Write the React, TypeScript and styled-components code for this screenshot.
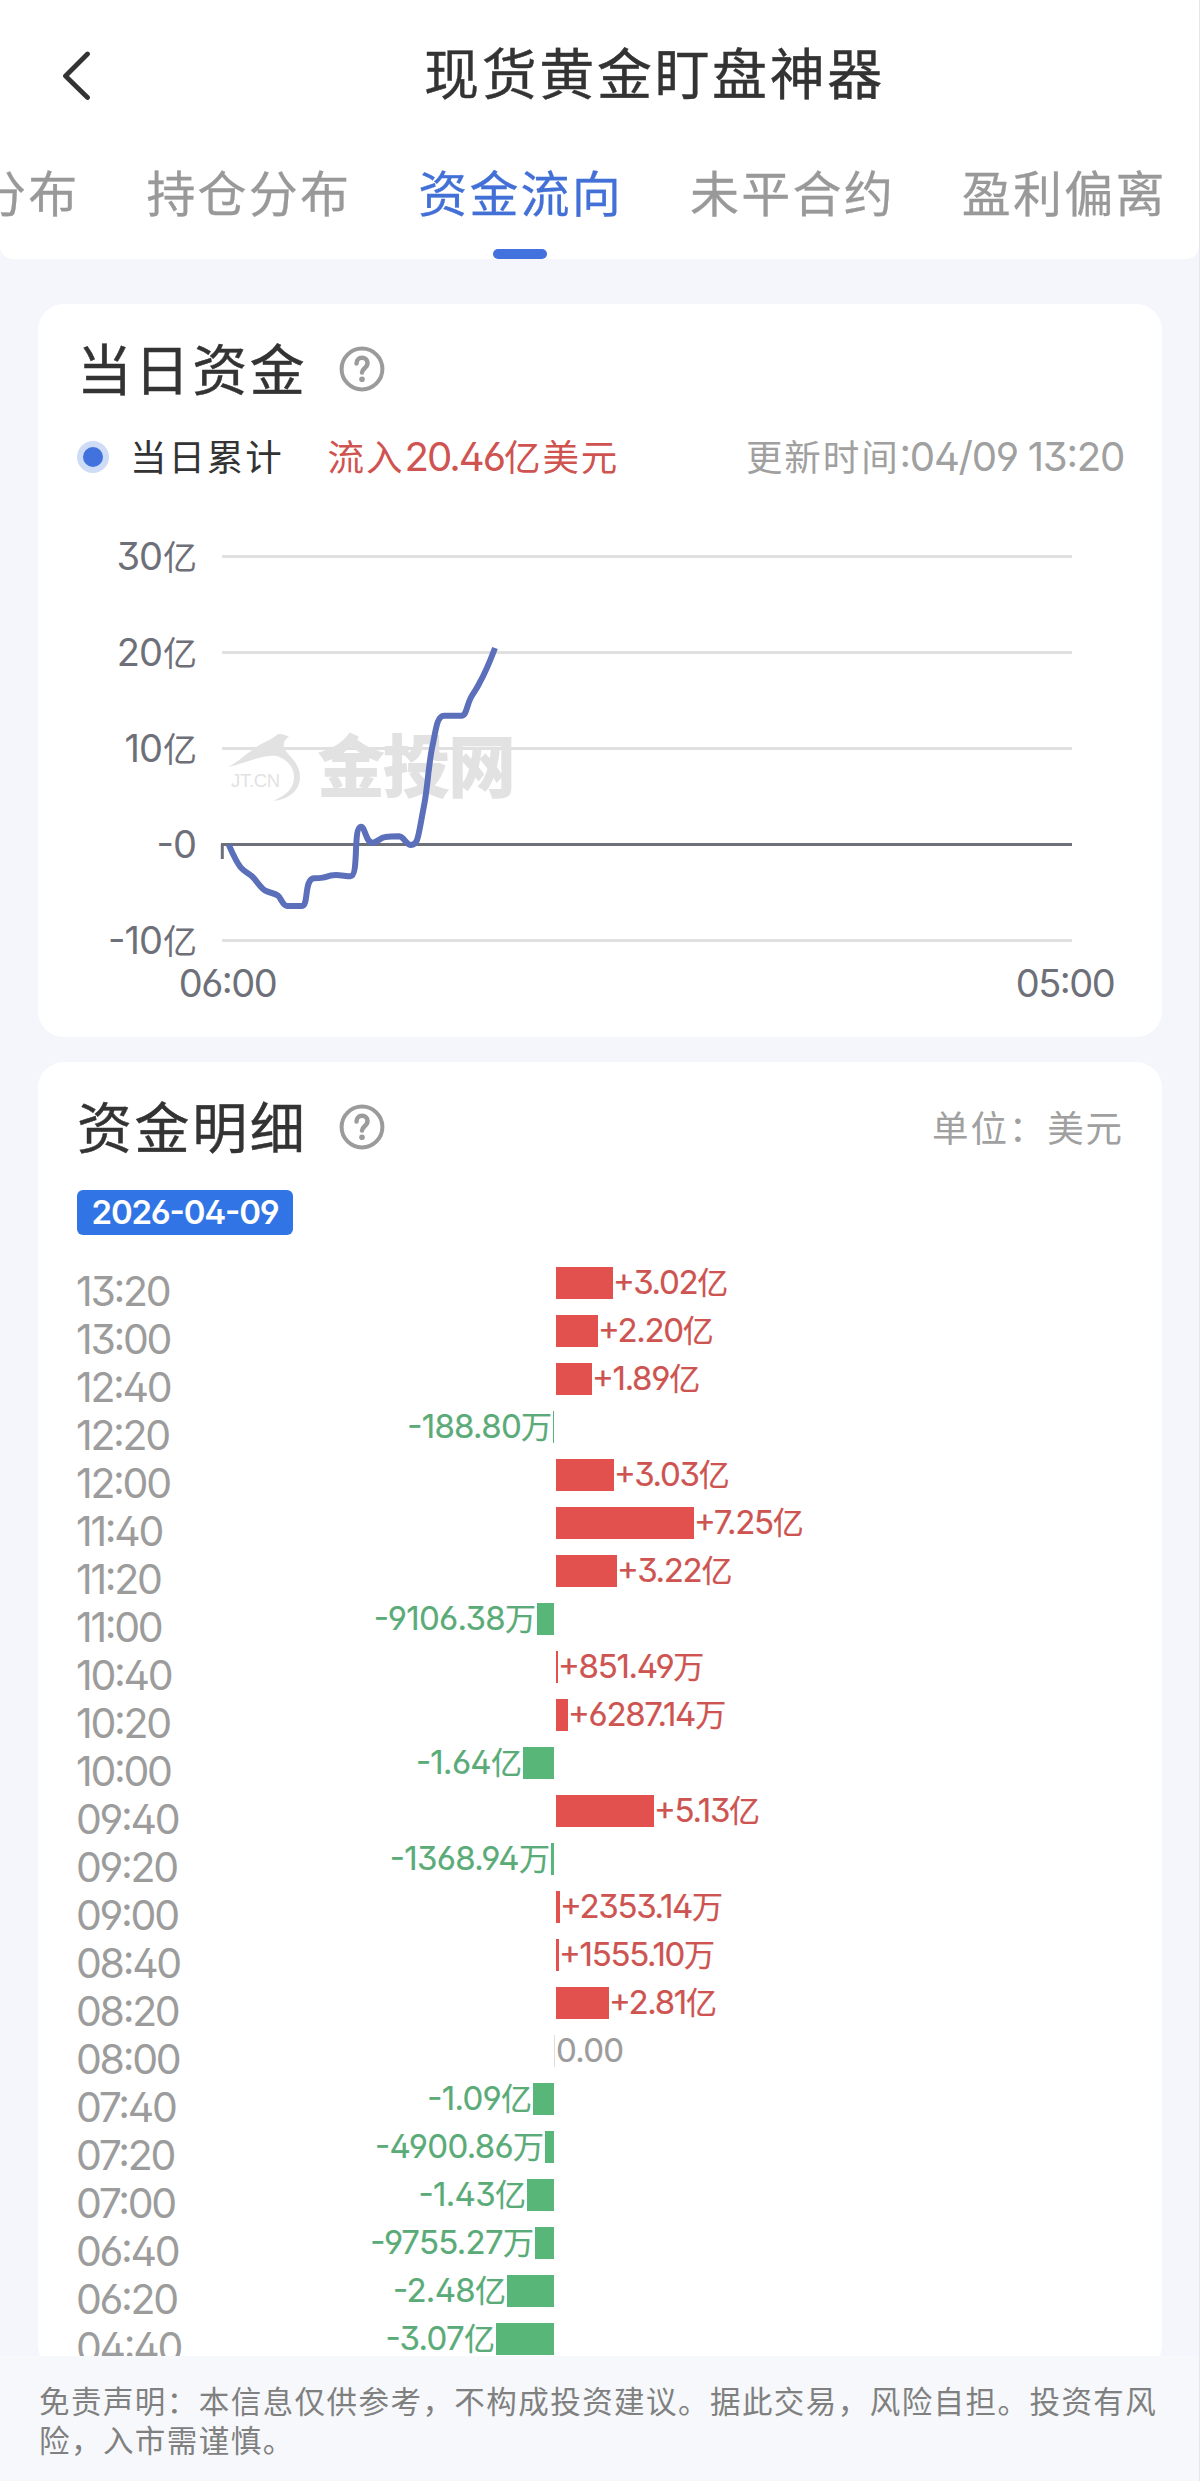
import React from 'react';
import styled, { createGlobalStyle } from 'styled-components';

const cjk = '"Noto Sans CJK SC", sans-serif';
const latin = 'Inter, "Noto Sans CJK SC", sans-serif';

const GlobalStyle = createGlobalStyle`
  *, *::before, *::after { box-sizing: border-box; }
  html, body { margin: 0; padding: 0; background: #f5f6fc; }
  body { font-family: ${cjk}; color: #333; }
`;

const Screen = styled.div`
  width: 1200px;
  height: 2481px;
  display: flex;
  flex-direction: column;
  overflow: hidden;
  background: #f5f6fc;
  border-right: 1px solid #e6e7ee;
`;

const Header = styled.header`
  flex: none;
  height: 259px;
  background: #fff;
  border-radius: 0 0 13px 13px;
  display: flex;
  flex-direction: column;
  overflow: hidden;
`;

const TitleBar = styled.div`
  height: 148px;
  display: grid;
  grid-template-columns: 303px 1fr 200px;
  align-items: center;
`;

const BackButton = styled.button`
  width: 60px;
  height: 60px;
  margin: 4px 0 0 46px;
  padding: 0;
  border: 0;
  background: none;
  display: flex;
  align-items: center;
  justify-content: center;
`;

const PageTitle = styled.h1`
  margin: 0 0 8px 7px;
  text-align: center;
  font-size: 55px;
  line-height: 80px;
  font-weight: 400;
  letter-spacing: 2.600px;
  -webkit-text-stroke: 0.4px currentColor;
  white-space: nowrap;
`;

const Tabs = styled.nav`
  height: 111px;
  display: flex;
  gap: 67px;
  margin-left: -23px;
`;

const Tab = styled.div<{ $active?: boolean }>`
  flex: none;
  display: flex;
  flex-direction: column;
  align-items: center;
  justify-content: space-between;
  font-size: 49px;
  line-height: 86px;
  letter-spacing: 2.2px;
  -webkit-text-stroke: 0.3px currentColor;
  white-space: nowrap;
  color: ${p => (p.$active ? '#4270d6' : '#999')};
`;

const Indicator = styled.span`
  width: 54px;
  height: 10px;
  margin-right: 2px;
  border-radius: 5px;
  background: #4272de;
`;

const Content = styled.main`
  flex: none;
  height: 2097px;
  padding: 45px 37px 0 38px;
  display: flex;
  flex-direction: column;
  gap: 25px;
  overflow: hidden;
`;

const Card = styled.section<{ $height?: number }>`
  flex: none;
  height: ${p => (p.$height ? `${p.$height}px` : 'auto')};
  background: #fff;
  border-radius: 26px;
  padding: 25px 39px 0;
`;

const CardHead = styled.div`
  height: 80px;
  display: flex;
  align-items: center;
`;

const CardTitle = styled.h2`
  margin: 0 32px 6px 0;
  font-size: 55px;
  line-height: 80px;
  font-weight: 400;
  letter-spacing: 2.600px;
  -webkit-text-stroke: 0.4px currentColor;
`;

const Note = styled.span`
  margin-left: auto;
  margin-right: -1px;
  font-size: 36.500px;
  line-height: 44px;
  letter-spacing: 1.900px;
  color: #a0a0a0;
  white-space: nowrap;
`;

const Num = styled.span<{ $spacing?: string }>`
  font-family: ${latin};
  font-size: 1.1em;
  line-height: 1;
  letter-spacing: ${p => p.$spacing ?? '-0.05em'};
  font-feature-settings: "cv09" 1, "ss01" 1, "case" 1;
`;

const Legend = styled.div`
  height: 54px;
  margin-top: 20px;
  display: flex;
  align-items: center;
  font-size: 36.500px;
  line-height: 54px;
  letter-spacing: 1.900px;
  white-space: nowrap;
`;

const Dot = styled.i`
  flex: none;
  width: 32px;
  height: 32px;
  border-radius: 50%;
  border: 6px solid #cfdcf6;
  background: #4272de;
  margin: 1px 21px 0 0;
`;

const LegendValue = styled.span`
  margin-left: 44px;
  color: #cf5350;
`;

const Chart = styled.svg`
  display: block;
  width: 1046px;
  height: 520px;
  font-family: ${latin};
  font-feature-settings: "cv09" 1, "ss01" 1, "case" 1;
`;

const DateBadge = styled.div`
  width: 216px;
  height: 45px;
  margin-top: 23px;
  border-radius: 6px;
  background: #3174e6;
  color: #fff;
  display: flex;
  align-items: center;
  justify-content: center;
  font: 600 33px/45px ${latin};
  letter-spacing: -1.2px;
  font-feature-settings: "cv09" 1, "ss01" 1, "case" 1;
`;

const Rows = styled.div`
  margin-top: 32px;
`;

const Row = styled.div`
  height: 48px;
  display: grid;
  grid-template-columns: 200px 277px 2px 1fr;
  align-items: start;
`;

const Time = styled.span`
  font: 400 41px/48px ${latin};
  letter-spacing: -2.3px;
  margin-left: -1px;
  color: #9c9c9c;
  font-feature-settings: "cv09" 1, "ss01" 1, "case" 1;
`;

const Side = styled.div<{ $left?: boolean }>`
  display: flex;
  align-items: center;
  justify-content: ${p => (p.$left ? 'flex-end' : 'flex-start')};
  height: 32px;
  white-space: nowrap;
`;

const Bar = styled.i<{ $up: boolean }>`
  flex: none;
  height: 32px;
  background: ${p => (p.$up ? '#e2514d' : '#58b778')};
`;

const Axis = styled.i<{ $on: boolean }>`
  width: 1px;
  height: 32px;
  background: ${p => (p.$on ? '#dedede' : 'transparent')};
`;

const Value = styled.span<{ $tone: 'up' | 'down' | 'flat' }>`
  font-size: 31px;
  line-height: 32px;
  padding: 0 1px 0 0;
  margin-top: -2px;
  -webkit-text-stroke: 0.2px currentColor;
  color: ${p => ({ up: '#cd5451', down: '#5aab78', flat: '#9c9c9c' })[p.$tone]};
`;

const ValueNum = styled(Num)<{ $tight: boolean }>`
  font-size: 33px;
  letter-spacing: ${p => (p.$tight ? '-1.3px' : '-0.7px')};
`;

const Disclaimer = styled.footer`
  flex: 1;
  padding: 25px 30px 0 39px;
  background: #f6f8fb;
  color: #808080;
  font-size: 30.500px;
  line-height: 39px;
  letter-spacing: 1.45px;
`;

const HelpIcon = () => (
  <svg width="46" height="46" viewBox="0 0 46 46" fill="none" stroke="#9b9b9b">
    <circle cx="23" cy="23" r="20.4" strokeWidth="4" />
    <path d="M17.500 17.500c0-3.700 2.500-5.700 5.500-5.700s5.500 2 5.500 5.200c0 2.500-1.100 3.700-2.900 5.200-1.700 1.500-2.600 2.500-2.600 4.300" strokeWidth="4.500" strokeLinecap="round" />
    <circle cx="23" cy="33.200" r="2.800" fill="#9b9b9b" stroke="none" />
  </svg>
);

const gridLines = [
  { y: 26, label: '30', unit: '亿' },
  { y: 122, label: '20', unit: '亿' },
  { y: 218, label: '10', unit: '亿' },
  { y: 314, label: '-0', unit: '' },
  { y: 410, label: '-10', unit: '亿' },
];

const FlowChart = () => (
  <Chart viewBox="77 483 1046 520">
    {gridLines.map(g => (
      <g key={g.label}>
        {g.y !== 314 && <rect x="222" y={g.y + 529} width="850" height="3" fill="#e0e0e1" />}
        <text x="196" y={g.y + 544} textAnchor="end" fontSize="38" letterSpacing="-1" fill="#6e7079">
          {g.label}
          {g.unit && <tspan fontFamily="Noto Sans CJK SC" fontSize="34" dx="1">{g.unit}</tspan>}
        </text>
      </g>
    ))}
    <g fill="#e2e2e3">
      <path d="M228 767C240 761 252 748 265 742C271 739 275 737 278 734C284 734 287 736 289 737C285 739 283 742 284 748C287 755 300 762 300 777C300 790 290 799 273 801C286 795 294 789 294 777C294 766 286 759 277 756C262 754 247 763 228 767Z" />
      <text x="231" y="787" fontSize="18.500" fontFamily="Liberation Sans" letterSpacing="-0.3">JT.CN</text>
      <text x="317" y="792" fontSize="68" fontWeight="900" fontFamily="Noto Sans CJK SC" textLength="199">金投网</text>
    </g>
    <path d="M221 844.500H1072M222.300 844V859" stroke="#6e7079" strokeWidth="3" fill="none" />
    <path
      transform="translate(180 620) scale(.33333)"
      d="M146 674C160 706 170 728 182 742C193 755 204 758 216 769C230 782 241 803 256 812C268 819 282 818 294 827C304 835 308 858 322 858L366 858C386 858 372 776 402 775C424 775 426 773 433 772C445 768 456 765 468 765C482 765 500 769 511 769C538 769 518 622 543 620C556 620 556 668 578 668C592 668 600 652 616 651C630 649 645 649 657 649C673 650 678 675 693 675C715 675 714 650 733 552C743 500 746 430 757 380C768 330 770 288 792 287L844 287C860 287 858 262 872 234C880 218 888 210 898 190C916 158 930 124 945 84"
      fill="none"
      stroke="#5b6fba"
      strokeWidth="18"
      strokeLinejoin="round"
    />
    <g fontSize="38" letterSpacing="-1.5" fill="#6e7079" textAnchor="middle">
      <text x="227.500" y="996.500">06:00</text>
      <text x="1065" y="996.500">05:00</text>
    </g>
  </Chart>
);

// time, printed amount, printed unit, value in 亿
const flows: [string, string, string, number][] = [
  ['13:20', '+3.02', '亿', 3.02],
  ['13:00', '+2.20', '亿', 2.2],
  ['12:40', '+1.89', '亿', 1.89],
  ['12:20', '-188.80', '万', -0.01888],
  ['12:00', '+3.03', '亿', 3.03],
  ['11:40', '+7.25', '亿', 7.25],
  ['11:20', '+3.22', '亿', 3.22],
  ['11:00', '-9106.38', '万', -0.910638],
  ['10:40', '+851.49', '万', 0.085149],
  ['10:20', '+6287.14', '万', 0.628714],
  ['10:00', '-1.64', '亿', -1.64],
  ['09:40', '+5.13', '亿', 5.13],
  ['09:20', '-1368.94', '万', -0.136894],
  ['09:00', '+2353.14', '万', 0.235314],
  ['08:40', '+1555.10', '万', 0.15551],
  ['08:20', '+2.81', '亿', 2.81],
  ['08:00', '0.00', '', 0],
  ['07:40', '-1.09', '亿', -1.09],
  ['07:20', '-4900.86', '万', -0.490086],
  ['07:00', '-1.43', '亿', -1.43],
  ['06:40', '-9755.27', '万', -0.975527],
  ['06:20', '-2.48', '亿', -2.48],
  ['04:40', '-3.07', '亿', -3.07],
];

const barWidth = (v: number) => Math.max(1, Math.round(Math.abs(v) * 19.03));

const FlowRow = ({ time, amount, unit, value }: { time: string; amount: string; unit: string; value: number }) => {
  const tone = value > 0 ? 'up' : value < 0 ? 'down' : 'flat';
  const label = (
    <Value $tone={tone}>
      <ValueNum $tight={value > 0}>{amount}</ValueNum>
      {unit}
    </Value>
  );
  return (
    <Row>
      <Time>{time}</Time>
      <Side $left>
        {value < 0 && label}
        {value < 0 && <Bar $up={false} style={{ width: barWidth(value) }} />}
      </Side>
      <Axis $on={value === 0} />
      <Side>
        {value > 0 && <Bar $up style={{ width: barWidth(value) }} />}
        {value >= 0 && label}
      </Side>
    </Row>
  );
};

export default function App() {
  return (
    <>
      <GlobalStyle />
      <Screen>
        <Header>
          <TitleBar>
            <BackButton aria-label="返回">
              <svg width="30" height="50" viewBox="0 0 30 50" fill="none" stroke="#333" strokeWidth="4.800" strokeLinecap="round" strokeLinejoin="round">
                <path d="M26.500 3L4.500 25L26.500 46.500" />
              </svg>
            </BackButton>
            <PageTitle>现货黄金盯盘神器</PageTitle>
          </TitleBar>
          <Tabs>
            <Tab>分布</Tab>
            <Tab>持仓分布</Tab>
            <Tab $active>
              资金流向
              <Indicator />
            </Tab>
            <Tab>未平合约</Tab>
            <Tab>盈利偏离</Tab>
          </Tabs>
        </Header>
        <Content>
          <Card $height={733}>
            <CardHead>
              <CardTitle>当日资金</CardTitle>
              <HelpIcon />
            </CardHead>
            <Legend>
              <Dot />
              当日累计
              <LegendValue>
                流入<Num>20.46</Num>亿美元
              </LegendValue>
              <Note>
                更新时间<Num $spacing="-0.032em">:04/09 13:20</Num>
              </Note>
            </Legend>
            <FlowChart />
          </Card>
          <Card>
            <CardHead>
              <CardTitle>资金明细</CardTitle>
              <HelpIcon />
              <Note>单位：美元</Note>
            </CardHead>
            <DateBadge>2026-04-09</DateBadge>
            <Rows>
              {flows.map(([time, amount, unit, value]) => (
                <FlowRow key={time} time={time} amount={amount} unit={unit} value={value} />
              ))}
            </Rows>
          </Card>
        </Content>
        <Disclaimer>
          免责声明：本信息仅供参考，不构成投资建议。据此交易，风险自担。投资有风险，入市需谨慎。
        </Disclaimer>
      </Screen>
    </>
  );
}
